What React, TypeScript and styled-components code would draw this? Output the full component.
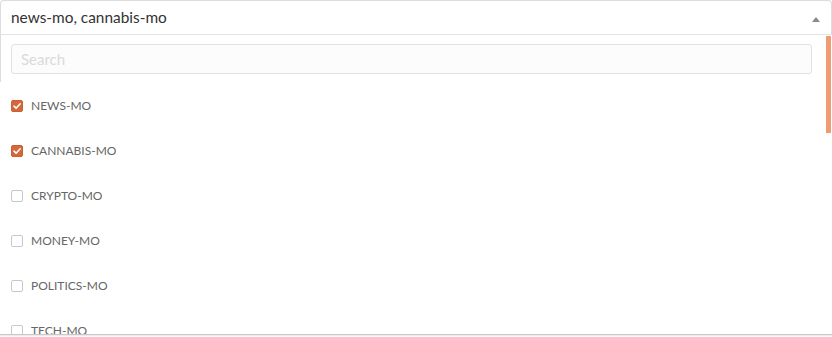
import { useState } from "react";
import styled, { createGlobalStyle } from "styled-components";

const GlobalStyle = createGlobalStyle`
  body {
    margin: 0;
    background: #fff;
    font-family: "Lato", "Open Sans", sans-serif;
  }
`;

const options = ["news-mo", "cannabis-mo", "crypto-mo", "money-mo", "politics-mo", "tech-mo"];

function App() {
  const [selected, setSelected] = useState<string[]>(["news-mo", "cannabis-mo"]);
  const [search, setSearch] = useState("");

  const toggle = (name: string) => {
    setSelected((prev) =>
      prev.includes(name) ? prev.filter((n) => n !== name) : [...prev, name]
    );
  };

  return (
    <Container>
      <GlobalStyle />
      <SelectBox>
        <SelectValue>{selected.join(", ")}</SelectValue>
        <Arrow />
      </SelectBox>
      <Dropdown>
        <SearchArea>
          <SearchInput
            placeholder="Search"
            value={search}
            onChange={(e) => setSearch(e.target.value)}
          />
        </SearchArea>
        <List>
          {options
            .filter((o) => o.includes(search.toLowerCase()))
            .map((o) => (
              <Item key={o} onClick={() => toggle(o)}>
                <Check checked={selected.includes(o)}>
                  {selected.includes(o) && (
                    <svg width="10" height="10" viewBox="0 0 10 10">
                      <path
                        d="M2 5.2 L4.1 7.2 L8.2 2.8"
                        fill="none"
                        stroke="#fff"
                        strokeWidth="1.6"
                        strokeLinecap="round"
                        strokeLinejoin="round"
                      />
                    </svg>
                  )}
                </Check>
                <Label>{o}</Label>
              </Item>
            ))}
        </List>
        <ScrollThumb />
      </Dropdown>
    </Container>
  );
}

const Container = styled.div`
  width: 832px;
  height: 337px;
  position: relative;
`;

const SelectBox = styled.div`
  height: 35px;
  box-sizing: border-box;
  border: 1px solid #dcdcdc;
  border-bottom-color: #e3e3e3;
  border-radius: 4px 4px 0 0;
  display: flex;
  align-items: center;
  justify-content: space-between;
  padding: 0 10px 0 10px;
`;

const SelectValue = styled.span`
  font-size: 15.4px;
  color: #333;
  margin-top: -1px;
`;

const Arrow = styled.span`
  width: 0;
  height: 0;
  border-left: 4.5px solid transparent;
  border-right: 4.5px solid transparent;
  border-bottom: 5px solid #8a8a8a;
  margin-right: 1px;
  margin-top: 3px;
`;

const Dropdown = styled.div`
  height: 299px;
  overflow: hidden;
  position: relative;
  border-bottom: 1px solid #c8c8c8;
  box-shadow: 0 1px 1px rgba(0, 0, 0, 0.08);
`;

const SearchArea = styled.div`
  padding: 9px 20px 8px 10px;
  border-left: 1px solid #dcdcdc;
`;

const SearchInput = styled.input`
  width: 100%;
  height: 30px;
  box-sizing: border-box;
  border: 1px solid #e2e2e2;
  border-radius: 3px;
  background: #fcfcfc;
  padding: 0 9px;
  font-family: inherit;
  font-size: 15px;
  color: #333;
  outline: 0;
  &::placeholder {
    color: #dadada;
  }
`;

const List = styled.div`
  display: flex;
  flex-direction: column;
  padding-top: 1px;
`;

const Item = styled.div`
  height: 45px;
  display: flex;
  align-items: center;
  padding-left: 11px;
  cursor: pointer;
`;

const Check = styled.span<{ checked: boolean }>`
  width: 12px;
  height: 12px;
  box-sizing: border-box;
  border-radius: 2px;
  display: flex;
  align-items: center;
  justify-content: center;
  background: ${(p) => (p.checked ? "#d4683b" : "#fff")};
  border: 1px solid ${(p) => (p.checked ? "#c9602f" : "#c8c8c8")};
  margin-right: 8px;
`;

const Label = styled.span`
  font-size: 12px;
  color: #666;
  text-transform: uppercase;
`;

const ScrollThumb = styled.div`
  position: absolute;
  right: 1px;
  top: 1px;
  width: 5px;
  height: 97px;
  background: #ef9c72;
`;

export default App;
